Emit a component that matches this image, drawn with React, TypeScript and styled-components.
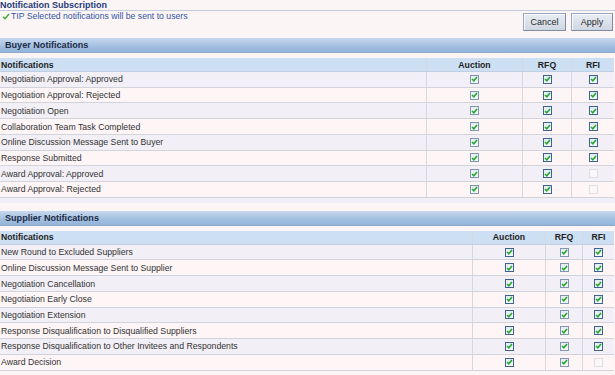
import React from "react";
import styled, { createGlobalStyle, css } from "styled-components";

const Global = createGlobalStyle`
  html, body { margin: 0; padding: 0; background: #fcf5f6; }
  body { font-family: "Liberation Sans", Arial, sans-serif; }
`;

const Page = styled.div`
  width: 615px;
  height: 375px;
  overflow: hidden;
  background: #fcf5f6;
  font-size: 8.7px;
  color: #333;
`;

const Title = styled.div`
  height: 10px;
  line-height: 10px;
  font-weight: bold;
  font-size: 9px;
  color: #233c7a;
  border-bottom: 1px solid #c3cbdd;
`;

const Toolbar = styled.div`
  display: flex;
  justify-content: space-between;
  align-items: flex-start;
  padding: 1px 2px 0 2px;
  height: 27px;
  box-sizing: border-box;
`;

const Tip = styled.div`
  display: flex;
  align-items: center;
  gap: 1px;
  color: #3356a3;
  line-height: 9px;
`;

const Buttons = styled.div`
  display: flex;
  gap: 5px;
  margin-top: 1px;
`;

const Button = styled.button<{ $w: number }>`
  width: ${(p) => p.$w}px;
  height: 18px;
  padding: 0;
  font-family: "Liberation Sans", Arial, sans-serif;
  font-size: 9px;
  color: #2b2b2b;
  background: linear-gradient(#e9edf3, #cfd7e3);
  border: 1px solid #9aa8bd;
  border-right-color: #7d8ca3;
  border-bottom-color: #7d8ca3;
  box-shadow: inset 1px 1px 0 #f6f8fb;
`;

const SectionHeader = styled.div<{ $top: number }>`
  margin-top: ${(p) => p.$top}px;
  height: 14px;
  line-height: 14px;
  padding-left: 5px;
  font-weight: bold;
  font-size: 9.1px;
  color: #1d2b44;
  background: linear-gradient(#c7d8ee, #a2bfe1 60%, #93b3da);
  border-bottom: 1px solid #8ea9cc;
`;

const Table = styled.div`
  margin-top: 5px;
  width: 614px;
`;

const Row = styled.div<{ $cols: string; $kind: "head" | "odd" | "even" }>`
  display: grid;
  grid-template-columns: ${(p) => p.$cols};
  height: ${(p) => (p.$kind === "head" ? 14 : 15.72)}px;
  box-sizing: border-box;
  border-bottom: 1px solid #d3d3dc;
  ${(p) =>
    p.$kind === "head"
      ? css`
          background: #cddff2;
          font-weight: bold;
          color: #1e1e1e;
          border-bottom-color: #c1cfe0;
        `
      : p.$kind === "odd"
      ? css`
          background: #f2eff6;
        `
      : css`
          background: #fdf5f6;
        `}
`;

const Cell = styled.div<{ $center?: boolean }>`
  display: flex;
  align-items: center;
  justify-content: ${(p) => (p.$center ? "center" : "flex-start")};
  padding-left: ${(p) => (p.$center ? 0 : 1)}px;
  border-right: 1px solid #d8d6de;
  white-space: nowrap;
  overflow: hidden;
  &:last-child { border-right: none; }
`;

const Box = styled.span<{ $state: "on" | "muted" | "off" }>`
  width: 9px;
  height: 9px;
  box-sizing: border-box;
  display: inline-flex;
  align-items: center;
  justify-content: center;
  ${(p) =>
    p.$state === "on"
      ? css`
          border: 1px solid #3f6390;
          background: linear-gradient(#e3ebf3, #f8fbfd);
        `
      : p.$state === "muted"
      ? css`
          border: 1px solid #7f96b2;
          background: linear-gradient(#e6ecf2, #f7f9fb);
        `
      : css`
          border: 1px solid #e2dde2;
          background: #fbf8f9;
        `}
`;

const Gap = styled.div`
  height: 5px;
  background: #f1eff6;
`;

const Check = () => (
  <svg width="7" height="6" viewBox="0 0 7 6">
    <path d="M1 3 L2.8 4.8 L6 1" fill="none" stroke="#22a82a" strokeWidth="1.6" />
  </svg>
);

const TipIcon = () => (
  <svg width="8" height="7" viewBox="0 0 8 7">
    <path d="M1 3.8 L3 5.8 L7 1" fill="none" stroke="#3aa83a" strokeWidth="1.4" />
  </svg>
);

type S = "on" | "muted" | "off";

const CheckBox = ({ state }: { state: S }) => (
  <Box $state={state}>{state !== "off" && <Check />}</Box>
);

type Item = { label: string; boxes: S[] };

const buyer: Item[] = [
  { label: "Negotiation Approval: Approved", boxes: ["muted", "on", "on"] },
  { label: "Negotiation Approval: Rejected", boxes: ["muted", "on", "on"] },
  { label: "Negotiation Open", boxes: ["muted", "on", "on"] },
  { label: "Collaboration Team Task Completed", boxes: ["muted", "on", "on"] },
  { label: "Online Discussion Message Sent to Buyer", boxes: ["muted", "on", "on"] },
  { label: "Response Submitted", boxes: ["muted", "on", "on"] },
  { label: "Award Approval: Approved", boxes: ["muted", "on", "off"] },
  { label: "Award Approval: Rejected", boxes: ["muted", "on", "off"] },
];

const supplier: Item[] = [
  { label: "New Round to Excluded Suppliers", boxes: ["on", "muted", "on"] },
  { label: "Online Discussion Message Sent to Supplier", boxes: ["on", "muted", "on"] },
  { label: "Negotiation Cancellation", boxes: ["on", "muted", "on"] },
  { label: "Negotiation Early Close", boxes: ["on", "muted", "on"] },
  { label: "Negotiation Extension", boxes: ["on", "muted", "on"] },
  { label: "Response Disqualification to Disqualified Suppliers", boxes: ["on", "muted", "on"] },
  { label: "Response Disqualification to Other Invitees and Respondents", boxes: ["on", "muted", "on"] },
  { label: "Award Decision", boxes: ["on", "muted", "off"] },
];

const NotifTable = ({ cols, items }: { cols: string; items: Item[] }) => (
  <Table>
    <Row $cols={cols} $kind="head">
      <Cell>Notifications</Cell>
      <Cell $center>Auction</Cell>
      <Cell $center>RFQ</Cell>
      <Cell $center>RFI</Cell>
    </Row>
    {items.map((it, i) => (
      <Row key={it.label} $cols={cols} $kind={i % 2 === 0 ? "odd" : "even"}>
        <Cell>{it.label}</Cell>
        {it.boxes.map((b, j) => (
          <Cell key={j} $center>
            <CheckBox state={b} />
          </Cell>
        ))}
      </Row>
    ))}
  </Table>
);

export default function App() {
  return (
    <Page>
      <Global />
      <Title>Notification Subscription</Title>
      <Toolbar>
        <Tip>
          <TipIcon />
          <span>TIP Selected notifications will be sent to users</span>
        </Tip>
        <Buttons>
          <Button $w={43}>Cancel</Button>
          <Button $w={42}>Apply</Button>
        </Buttons>
      </Toolbar>
      <SectionHeader $top={0}>Buyer Notifications</SectionHeader>
      <NotifTable cols="427px 96px 49px 42px" items={buyer} />
      <Gap />
      <SectionHeader $top={8}>Supplier Notifications</SectionHeader>
      <NotifTable cols="473px 73px 37px 31px" items={supplier} />
    </Page>
  );
}
